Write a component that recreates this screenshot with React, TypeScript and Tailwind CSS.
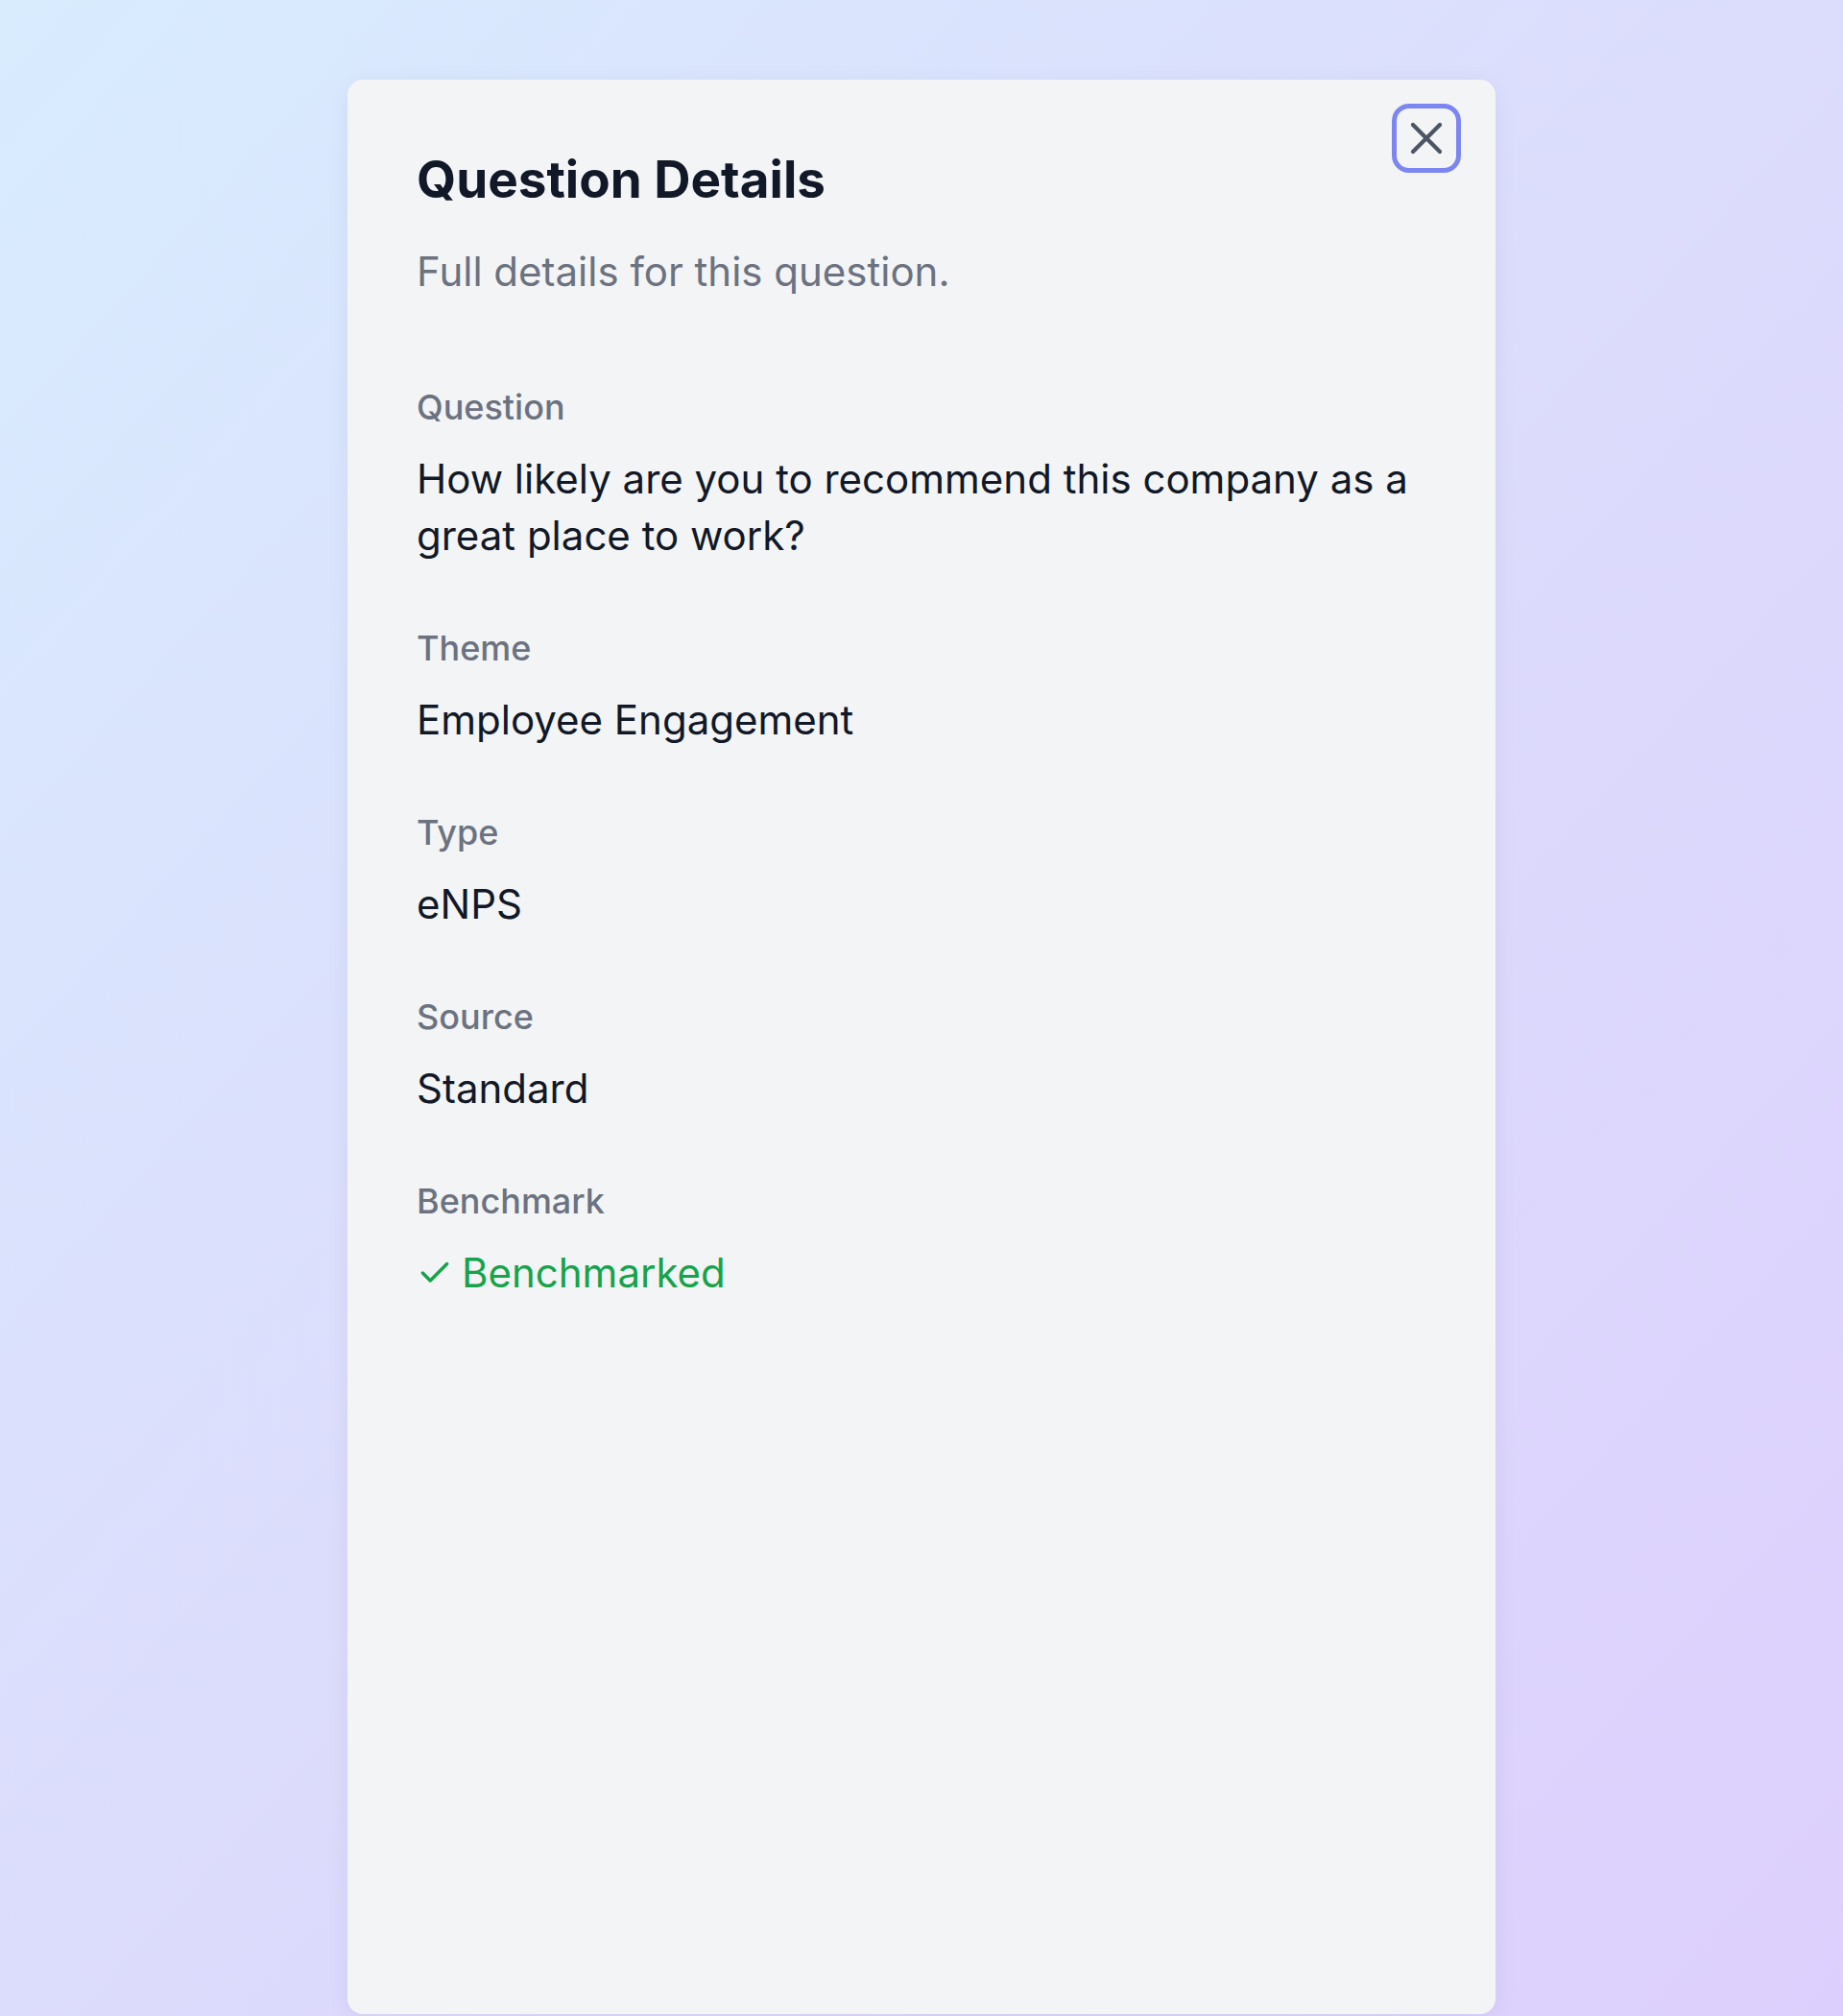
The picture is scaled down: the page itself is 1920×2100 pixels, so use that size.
import { Check, X } from 'lucide-react';

const fields = [
  { label: 'Question', value: 'How likely are you to recommend this company as a great place to work?' },
  { label: 'Theme', value: 'Employee Engagement' },
  { label: 'Type', value: 'eNPS' },
  { label: 'Source', value: 'Standard' },
];

export default function App() {
  return (
    <div className="min-h-[2100px] w-full bg-linear-to-br from-[#d8ecfe] via-[#dcdcfc] to-[#ddcffd] pt-[83px] font-['Inter',sans-serif]">
      <div className="relative mx-auto h-[2015px] w-[1196px] rounded-[16px] bg-[#f3f4f6] px-[72px] pt-[72px] shadow-[0_4px_24px_rgba(30,41,59,0.06)]">
        <button
          type="button"
          className="absolute right-[36px] top-[25px] flex h-[72px] w-[72px] items-center justify-center rounded-[18px] border-[5px] border-[#7c86f2] text-[#4b5563]"
        >
          <X size={56} strokeWidth={1.8} />
        </button>

        <h2 className="text-[53px] font-bold leading-[64px] text-[#111827]">Question Details</h2>
        <p className="mt-[37px] text-[42px] leading-[54px] text-[#6b7280]">Full details for this question.</p>

        <div className="mt-[90px] flex flex-col gap-[64px]">
          {fields.map((f) => (
            <div key={f.label} className="flex flex-col gap-[21px]">
              <div className="text-[36px] font-medium leading-[48px] text-[#6b7280]">{f.label}</div>
              <div className="text-[42px] leading-[59px] text-[#111827]">{f.value}</div>
            </div>
          ))}
          <div className="flex flex-col gap-[21px]">
            <div className="text-[36px] font-medium leading-[48px] text-[#6b7280]">Benchmark</div>
            <div className="flex items-center gap-[9px] text-[42px] leading-[59px] text-[#16a34a]">
              <Check size={38} strokeWidth={2.2} />
              <span>Benchmarked</span>
            </div>
          </div>
        </div>
      </div>
    </div>
  );
}
